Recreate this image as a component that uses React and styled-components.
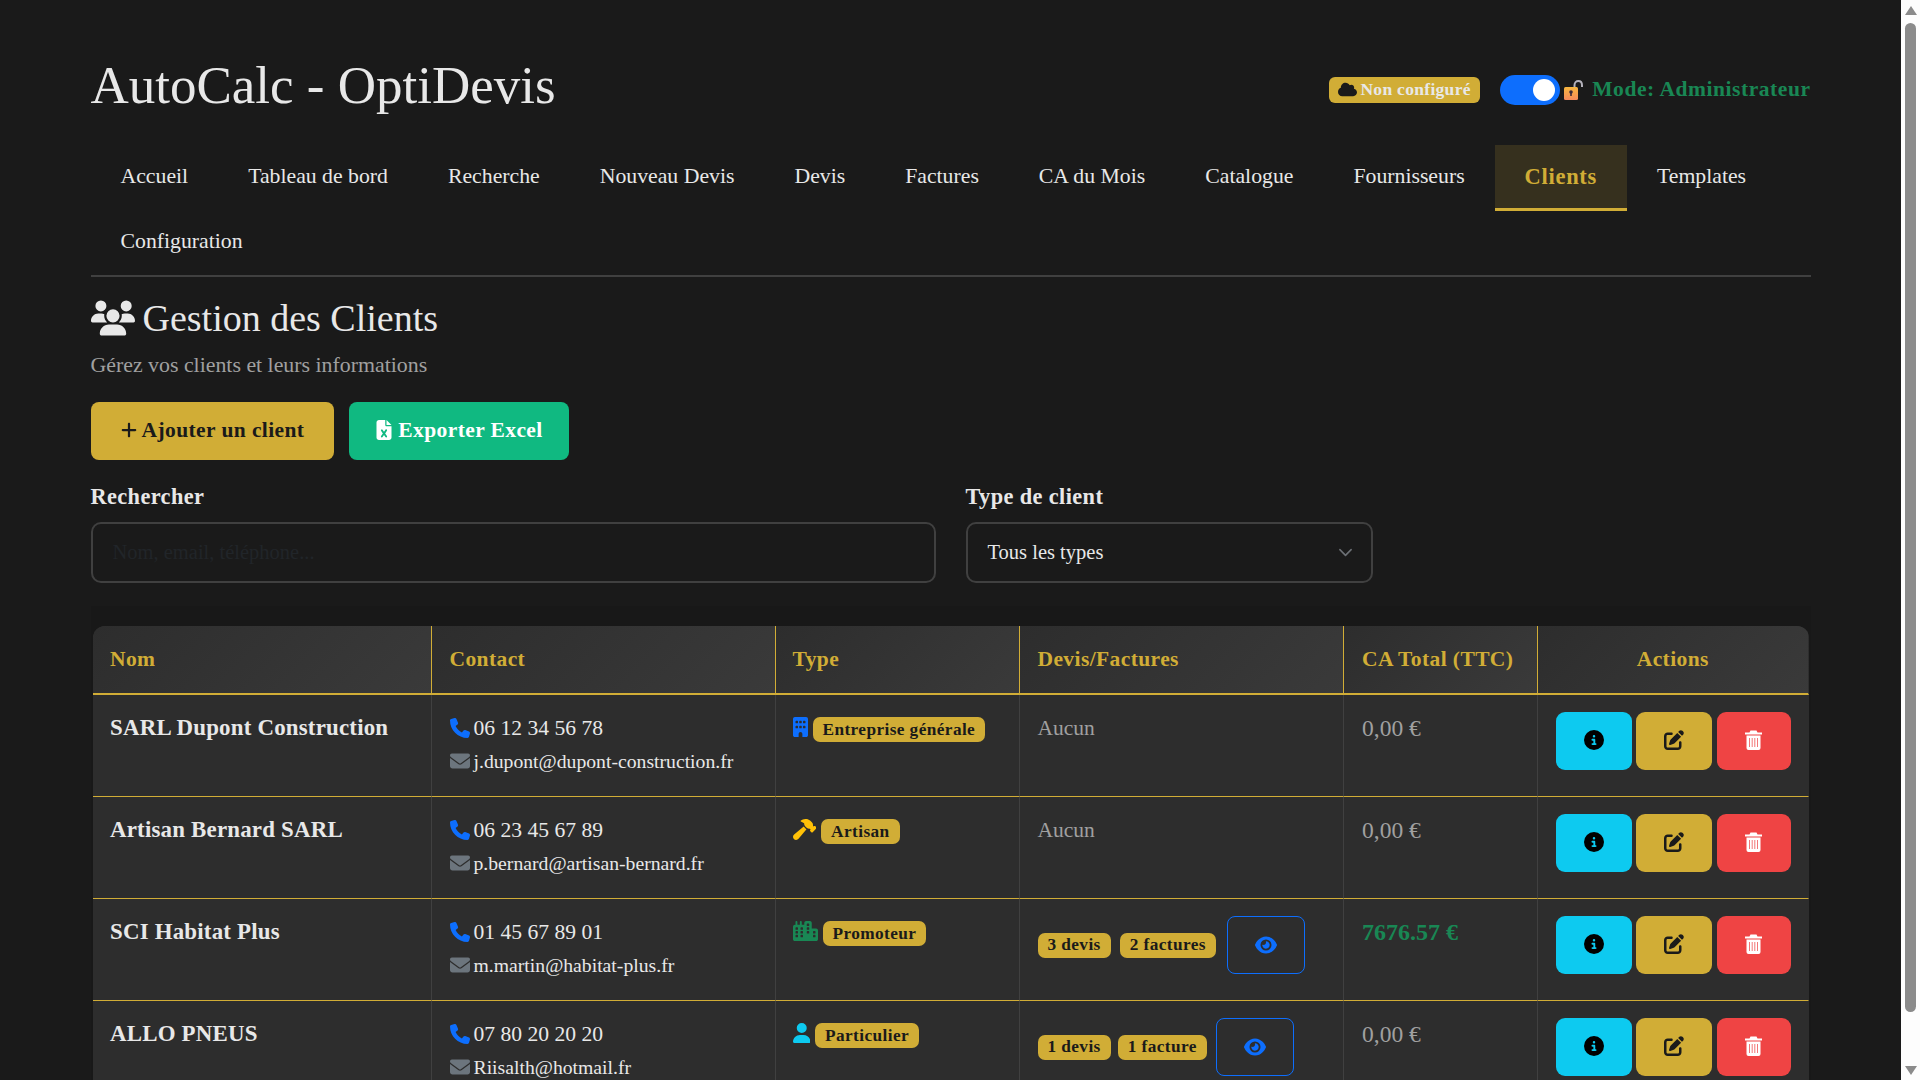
import React from 'react';
import styled, { createGlobalStyle } from 'styled-components';
import {
    FaUsers, FaCloud, FaPlus, FaFileExcel, FaPhone, FaEnvelope, FaBuilding, FaHammer,
    FaCity, FaUser, FaEye, FaCircleInfo, FaPenToSquare,
} from 'react-icons/fa6';

const GOLD = '#d1ad36';
const SERIF = '"Liberation Serif", "Times New Roman", serif';

const navItems = ['Accueil', 'Tableau de bord', 'Recherche', 'Nouveau Devis', 'Devis', 'Factures', 'CA du Mois', 'Catalogue', 'Fournisseurs', 'Clients', 'Templates', 'Configuration'];

const clients = [
    { name: 'SARL Dupont Construction', phone: '06 12 34 56 78', email: 'j.dupont@dupont-construction.fr', type: 'Entreprise générale', Icon: FaBuilding, iconColor: '#0d6efd', iconW: 15, iconH: 20, total: '0,00 €' },
    { name: 'Artisan Bernard SARL', phone: '06 23 45 67 89', email: 'p.bernard@artisan-bernard.fr', type: 'Artisan', Icon: FaHammer, iconColor: '#ffc107', iconW: 23.6, iconH: 21, total: '0,00 €' },
    { name: 'SCI Habitat Plus', phone: '01 45 67 89 01', email: 'm.martin@habitat-plus.fr', type: 'Promoteur', Icon: FaCity, iconColor: '#198754', iconW: 25, iconH: 20, total: '7676.57 €', positive: true, docs: ['3 devis', '2 factures'], docsGap: 9 },
    { name: 'ALLO PNEUS', phone: '07 80 20 20 20', email: 'Riisalth@hotmail.fr', type: 'Particulier', Icon: FaUser, iconColor: '#0dcaf0', iconW: 17.5, iconH: 20, total: '0,00 €', docs: ['1 devis', '1 facture'], docsGap: 7 },
];

const GlobalStyle = createGlobalStyle`
    body {
        margin: 0;
        padding-right: 19px;
        background: #1a1a1a;
        color: #e0e0e0;
        font-family: ${SERIF};
    }
`;

// the browser's scrollbar, which headless mode leaves out
const ScrollTrack = styled.div`
    position: fixed;
    top: 0;
    right: 0;
    bottom: 0;
    width: 19px;
    display: flex;
    flex-direction: column;
    align-items: center;
    box-sizing: border-box;
    padding: 6px 0 5px;
    background: #fdfdfd;
`;

const ScrollArrow = styled.span`
    width: 0;
    height: 0;
    margin-top: ${p => (p.$down ? 'auto' : '0')};
    border-left: 6.5px solid transparent;
    border-right: 6.5px solid transparent;
    border-${p => (p.$down ? 'top' : 'bottom')}: 9px solid #8b8b8b;
`;

const ScrollThumb = styled.span`
    width: 11px;
    height: 989px;
    margin-top: 8px;
    border-radius: 6px;
    background: #8b8b8b;
`;

const Page = styled.div`
    width: 1720px;
    margin: 0 auto;
    padding: 48px 0 36px;
`;

const Header = styled.header`
    display: flex;
    justify-content: space-between;
    align-items: center;
    height: 73px;
    margin-bottom: 24px;
`;

const Title = styled.h1`
    margin: 0;
    font-size: 53px;
    font-weight: 400;
    color: #e8e8e8;
`;

const Status = styled.div`
    display: flex;
    align-items: center;
    margin-top: 10px;
`;

const CloudBadge = styled.span`
    display: inline-flex;
    align-items: center;
    gap: 3px;
    height: 26px;
    padding: 0 9.5px;
    margin-right: 20px;
    border-radius: 6px;
    background: ${GOLD};
    color: #e8e8e8;
    font-size: 17.5px;
    font-weight: 700;
    letter-spacing: .3px;
    svg {
        color: #1a1a1a;
        font-size: 19px;
    }
`;

const Toggle = styled.span`
    display: flex;
    align-items: center;
    justify-content: flex-end;
    width: 60px;
    height: 30px;
    padding-right: 5px;
    box-sizing: border-box;
    border-radius: 15px;
    background: #0d6efd;
    &::after {
        content: '';
        width: 22px;
        height: 22px;
        border-radius: 50%;
        background: #fff;
    }
`;

const LockIcon = styled.svg`
    width: 19px;
    height: 20px;
    margin: 0 9px 0 4px;
`;

const ModeText = styled.span`
    color: #198754;
    font-size: 21.5px;
    font-weight: 700;
    letter-spacing: .55px;
`;

const Nav = styled.nav`
    display: flex;
    flex-wrap: wrap;
    border-bottom: 2px solid #404040;
`;

const NavItem = styled.a`
    box-sizing: border-box;
    height: ${p => (p.$wrapped ? '64px' : '66px')};
    padding: 0 30px;
    display: flex;
    align-items: center;
    font-size: ${p => (p.$active ? '22.5px' : '21.75px')};
    font-weight: ${p => (p.$active ? 700 : 400)};
    letter-spacing: ${p => (p.$active ? '.7px' : '0')};
    color: ${p => (p.$active ? GOLD : '#e8e8e8')};
    background: ${p => (p.$active ? 'rgba(212, 175, 55, .15)' : 'transparent')};
    border-bottom: 3px solid ${p => (p.$active ? GOLD : 'transparent')};
`;

const SectionTitle = styled.h2`
    display: flex;
    align-items: center;
    gap: 8px;
    margin: 19px 0 0;
    height: 44px;
    font-size: 38px;
    font-weight: 400;
    color: #e8e8e8;
`;

const Subtitle = styled.p`
    margin: 13px 0 0;
    font-size: 21.85px;
    line-height: 24px;
    color: #a0a0a0;
`;

const Actions = styled.div`
    display: flex;
    gap: 15px;
    margin-top: 25px;
`;

const MainButton = styled.button`
    display: flex;
    align-items: center;
    justify-content: center;
    gap: 4px;
    height: 58px;
    width: ${p => p.$width}px;
    padding: 0 0 2px;
    border: 0;
    border-radius: 8px;
    background: ${p => p.$bg};
    color: ${p => p.$color};
    font-family: ${SERIF};
    font-size: 21.5px;
    font-weight: 700;
    letter-spacing: .4px;
`;

const Filters = styled.div`
    display: grid;
    grid-template-columns: 845px 407px;
    gap: 30px;
    margin-top: 25px;
`;

const Label = styled.label`
    display: block;
    margin-bottom: 13px;
    font-size: 22.3px;
    line-height: 24px;
    font-weight: 700;
    letter-spacing: .4px;
    color: #e8e8e8;
`;

const SearchInput = styled.input`
    display: block;
    box-sizing: border-box;
    width: 100%;
    height: 61px;
    padding: 0 20px;
    border: 2px solid #404040;
    border-radius: 10px;
    background: #1a1a1a;
    font-family: ${SERIF};
    font-size: 20.5px;
    &::placeholder {
        color: #212529;
        opacity: 1;
    }
`;

const SelectBox = styled.div`
    display: flex;
    align-items: center;
    justify-content: space-between;
    box-sizing: border-box;
    height: 61px;
    padding: 0 18px 0 20px;
    border: 2px solid #404040;
    border-radius: 10px;
    font-size: 20.5px;
    color: #e8e8e8;
    svg {
        width: 15px;
        height: 15px;
    }
`;

const TableWrap = styled.div`
    margin-top: 23px;
    padding: 20px 1.5px 0 2.5px;
    background: #181818;
`;

const Table = styled.table`
    width: 1716px;
    table-layout: fixed;
    border-collapse: separate;
    border-spacing: 0;
    border-radius: 12px 12px 0 0;
    overflow: hidden;
    background: #2d2d2d;
`;

const HeadCell = styled.th`
    box-sizing: border-box;
    height: 69px;
    padding: 0 18px;
    text-align: ${p => (p.$center ? 'center' : 'left')};
    font-size: 21.5px;
    font-weight: 700;
    letter-spacing: .4px;
    color: ${GOLD};
    background: linear-gradient(135deg, #2d2d2d, #3a3a3a);
    border-bottom: 2px solid ${GOLD};
    border-right: 1px solid ${p => (p.$last ? 'transparent' : GOLD)};
    &:first-child, &:nth-child(3) {
        padding-left: 17px;
    }
`;

const Cell = styled.td`
    box-sizing: border-box;
    height: 102px;
    padding: 18px 17px 17px 18px;
    vertical-align: top;
    border-bottom: 1px solid ${GOLD};
    border-right: 1px solid ${p => (p.$last ? 'transparent' : '#404040')};
    &:first-child, &:nth-child(3) {
        padding-left: 17px;
    }
`;

const ClientName = styled.div`
    font-size: 22.9px;
    line-height: 30px;
    font-weight: 700;
    letter-spacing: .2px;
    color: #e8e8e8;
    white-space: nowrap;
`;

const ContactLine = styled.div`
    display: flex;
    align-items: center;
    gap: 4px;
    height: 30px;
    margin-bottom: 3px;
    font-size: ${p => p.$size}px;
    color: #e8e8e8;
    white-space: nowrap;
    svg {
        flex: none;
    }
`;

const TypeRow = styled.div`
    display: flex;
    align-items: flex-start;
    gap: 5px;
    padding-top: 4px;
`;

const TypeIcon = styled.span`
    display: flex;
    flex: none;
    color: ${p => p.$color};
    svg {
        width: ${p => p.$w}px;
        height: ${p => p.$h}px;
    }
`;

const Badge = styled.span`
    display: inline-flex;
    align-items: center;
    height: 25px;
    padding: 0 10px;
    border-radius: 7px;
    background: ${GOLD};
    color: #1a1a1a;
    font-size: 17.3px;
    font-weight: 700;
    letter-spacing: .4px;
    white-space: nowrap;
`;

const DocsRow = styled.div`
    display: flex;
    align-items: center;
    gap: ${p => p.$gap}px;
    margin-top: -1px;
`;

const EyeButton = styled.button`
    display: flex;
    align-items: center;
    justify-content: center;
    box-sizing: border-box;
    width: 78px;
    height: 58px;
    margin-left: 2px;
    padding: 0;
    border: 1px solid #0d6efd;
    border-radius: 8px;
    background: transparent;
    color: #0d6efd;
    font-size: 22px;
`;

const Muted = styled.div`
    font-size: ${p => p.$size}px;
    line-height: 30px;
    color: #a0a0a0;
`;

const Amount = styled.div`
    font-size: 24px;
    line-height: 30px;
    font-weight: 700;
    color: #198754;
`;

const ActionButtons = styled.div`
    display: flex;
    gap: 4.6px;
    margin-top: -1px;
`;

const IconButton = styled.button`
    display: flex;
    align-items: center;
    justify-content: center;
    flex: none;
    width: ${p => p.$width || 76}px;
    height: 58px;
    padding: 0 0 2px;
    border: 0;
    border-radius: 9px;
    background: ${p => p.$bg};
    color: ${p => p.$color};
    font-size: 20px;
`;

const TrashGlyph = styled.svg`
    width: 17px;
    height: 20px;
`;

function OpenLock() {
    return (
        <LockIcon viewBox="0 0 19 20">
            <defs>
                <linearGradient id="lockBody" x1="0" y1="0" x2="0" y2="1">
                    <stop offset="0" stopColor="#f8b73e" />
                    <stop offset="1" stopColor="#f58a5b" />
                </linearGradient>
            </defs>
            <path d="M10.5 9V5.2C10.5 2.6 12.3 1 14.3 1S18 2.6 18 5.2V7" fill="none" stroke="#b4b2bb" strokeWidth="2" />
            <rect x="0" y="7" width="14" height="13" rx="1.5" fill="url(#lockBody)" />
            <circle cx="7" cy="12" r="1.8" fill="#3a2a3a" />
            <rect x="6.2" y="12" width="1.6" height="4" fill="#3a2a3a" />
        </LockIcon>
    );
}

function TrashIcon() {
    return (
        <TrashGlyph viewBox="0 0 17 20" fill="currentColor">
            <path d="M5.5 0.5h6l1 2H17v2H0v-2h4.5z" />
            <path d="M1.5 5.5h14V18a2 2 0 0 1-2 2h-10a2 2 0 0 1-2-2z" />
            <path d="M4.5 8v9M7.2 8v9M9.8 8v9M12.5 8v9" stroke="#ef4444" strokeWidth=".9" opacity=".8" />
        </TrashGlyph>
    );
}

function ClientRow({ client }) {
    const { name, phone, email, type, Icon, iconColor, iconW, iconH, total, positive, docs, docsGap } = client;
    return (
        <tr>
            <Cell><ClientName>{name}</ClientName></Cell>
            <Cell>
                <ContactLine $size={21.6}><FaPhone size={20} color="#0d6efd" />{phone}</ContactLine>
                <ContactLine $size={19.7}><FaEnvelope size={20} color="#6c757d" />{email}</ContactLine>
            </Cell>
            <Cell>
                <TypeRow>
                    <TypeIcon $color={iconColor} $w={iconW} $h={iconH}><Icon /></TypeIcon>
                    <Badge>{type}</Badge>
                </TypeRow>
            </Cell>
            <Cell>
                {docs ? (
                    <DocsRow $gap={docsGap}>
                        {docs.map((d) => <Badge key={d}>{d}</Badge>)}
                        <EyeButton><FaEye /></EyeButton>
                    </DocsRow>
                ) : <Muted $size={21.5}>Aucun</Muted>}
            </Cell>
            <Cell>{positive ? <Amount>{total}</Amount> : <Muted $size={23.5}>{total}</Muted>}</Cell>
            <Cell $last>
                <ActionButtons>
                    <IconButton $bg="#0dcaf0" $color="#000"><FaCircleInfo /></IconButton>
                    <IconButton $bg={GOLD} $color="#1a1a1a"><FaPenToSquare /></IconButton>
                    <IconButton $bg="#ef4444" $color="#fff" $width={74}><TrashIcon /></IconButton>
                </ActionButtons>
            </Cell>
        </tr>
    );
}

export default function App() {
    return (
        <>
            <GlobalStyle />
            <Page>
                <Header>
                    <Title>AutoCalc - OptiDevis</Title>
                    <Status>
                        <CloudBadge><FaCloud />Non configuré</CloudBadge>
                        <Toggle />
                        <OpenLock />
                        <ModeText>Mode: Administrateur</ModeText>
                    </Status>
                </Header>

                <Nav>
                    {navItems.map((item) => (
                        <NavItem key={item} $active={item === 'Clients'} $wrapped={item === 'Configuration'}>{item}</NavItem>
                    ))}
                </Nav>

                <SectionTitle><FaUsers size={44} />Gestion des Clients</SectionTitle>
                <Subtitle>Gérez vos clients et leurs informations</Subtitle>

                <Actions>
                    <MainButton $width={243} $bg={GOLD} $color="#1a1a1a"><FaPlus size={18} />Ajouter un client</MainButton>
                    <MainButton $width={220} $bg="#10b981" $color="#fff"><FaFileExcel size={20} />Exporter Excel</MainButton>
                </Actions>

                <Filters>
                    <div>
                        <Label>Rechercher</Label>
                        <SearchInput placeholder="Nom, email, téléphone..." />
                    </div>
                    <div>
                        <Label>Type de client</Label>
                        <SelectBox>
                            Tous les types
                            <svg viewBox="0 0 16 16"><path d="M2 5l6 6 6-6" fill="none" stroke="#6c7075" strokeWidth="1.7" strokeLinecap="round" strokeLinejoin="round" /></svg>
                        </SelectBox>
                    </div>
                </Filters>

                <TableWrap>
                    <Table>
                        <colgroup>
                            <col width="338.5" />
                            <col width="344" />
                            <col width="244" />
                            <col width="324.5" />
                            <col width="193.5" />
                            <col width="271.5" />
                        </colgroup>
                        <thead>
                            <tr>
                                <HeadCell>Nom</HeadCell>
                                <HeadCell>Contact</HeadCell>
                                <HeadCell>Type</HeadCell>
                                <HeadCell>Devis/Factures</HeadCell>
                                <HeadCell>CA Total (TTC)</HeadCell>
                                <HeadCell $center $last>Actions</HeadCell>
                            </tr>
                        </thead>
                        <tbody>
                            {clients.map((c) => <ClientRow key={c.name} client={c} />)}
                        </tbody>
                    </Table>
                </TableWrap>
            </Page>

            <ScrollTrack>
                <ScrollArrow />
                <ScrollThumb />
                <ScrollArrow $down />
            </ScrollTrack>
        </>
    );
}
